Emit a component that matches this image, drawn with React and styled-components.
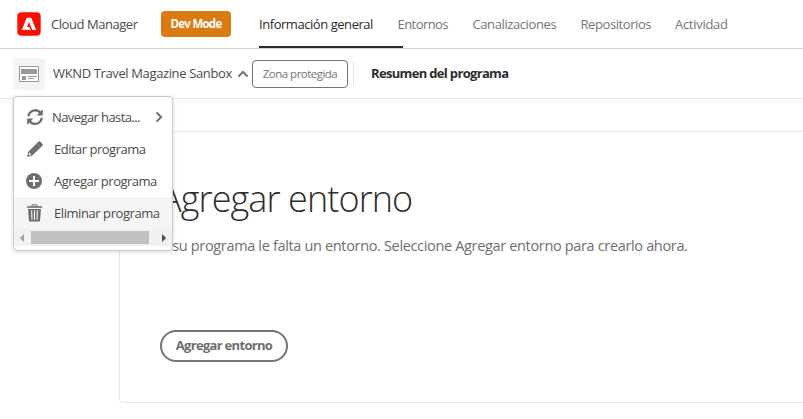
import React from "react";
import styled, { createGlobalStyle } from "styled-components";

const GlobalStyle = createGlobalStyle`
  *, *::before, *::after { box-sizing: border-box; }
  html, body { margin: 0; overflow: hidden; background: #fff; }
  body, button { font-family: "Open Sans", "Noto Sans", sans-serif; font-size: 13px; }
`;

const Page = styled.div`
  position: relative;
  width: 803px;
  height: 419px;
  overflow: hidden;
  background: #fff;
  color: #4b4b4b;
`;

const Label = styled.span`
  white-space: nowrap;
  line-height: 18px;
  letter-spacing: ${(p) => p.$track || -0.45}px;
`;

const Header = styled.header`
  display: flex;
  align-items: center;
  height: 49px;
  padding-left: 17px;
  border-bottom: 1px solid #d0d0d0;
`;

const Brand = styled.div`
  display: flex;
  align-items: center;
  gap: 10px;
  width: 144px;
`;

const ModeBadge = styled.div`
  display: flex;
  align-items: center;
  justify-content: center;
  width: 70px;
  height: 26px;
  margin-right: 28px;
  border-radius: 4px;
  background: #da7b11;
  color: #fff;
  font-size: 11.5px;
  font-weight: 700;
`;

const Tabs = styled.nav`
  display: flex;
  height: 48px;
`;

const Tab = styled.a`
  position: relative;
  display: flex;
  align-items: center;
  width: ${(p) => p.$width}px;
  color: ${(p) => (p.$active ? "#2c2c2c" : "#747474")};
  &::after {
    content: "";
    display: ${(p) => (p.$active ? "block" : "none")};
    position: absolute;
    left: 0;
    bottom: 0;
    width: 144px;
    height: 2px;
    background: #2c2c2c;
  }
`;

const ProgramBar = styled.div`
  display: flex;
  align-items: center;
  height: 50px;
  padding-left: 13px;
  border-bottom: 1px solid #e8e8e8;
`;

const Thumbnail = styled.div`
  display: flex;
  align-items: center;
  justify-content: center;
  width: 32px;
  height: 32px;
  margin-right: 8px;
  border-radius: 4px;
  background: #f4f4f4;
`;

const ProgramName = styled.div`
  display: flex;
  align-items: center;
  width: 199px;
  padding-bottom: 2px;
  gap: 6px;
  svg { margin-top: 2px; }
`;

const SandboxTag = styled.div`
  display: flex;
  align-items: center;
  justify-content: center;
  width: 96px;
  height: 28px;
  border: 1px solid #747474;
  border-radius: 4px;
  color: #747474;
  font-size: 11.5px;
`;

const Divider = styled.div`
  width: 1px;
  height: 24px;
  margin: 0 17px 0 5px;
  background: #e8e8e8;
`;

const Section = styled.div`
  padding-bottom: 2px;
  color: #2c2c2c;
  font-weight: 700;
`;

const Card = styled.main`
  display: flex;
  flex-direction: column;
  align-items: flex-start;
  width: 720px;
  height: 272px;
  margin: 32px 0 0 119px;
  padding: 42px 0 0 40px;
  border: 1px solid #e6e6e6;
  border-radius: 4px;
`;

const Title = styled.h1`
  margin: 0;
  color: #2c2c2c;
  font-size: 36px;
  font-weight: 300;
  line-height: 50px;
  letter-spacing: -0.9px;
  white-space: nowrap;
`;

const Description = styled.p`
  margin: 10px 0 0;
  color: #6e6e6e;
  font-size: 14.5px;
  line-height: 24px;
  letter-spacing: -0.34px;
  white-space: nowrap;
`;

const OutlineButton = styled.button`
  width: 128px;
  height: 32px;
  margin-top: 72px;
  padding: 0 0 2px;
  border: 2px solid #747474;
  border-radius: 16px;
  background: #fff;
  color: #6e6e6e;
  font-weight: 700;
`;

const Menu = styled.div`
  position: absolute;
  left: 13px;
  top: 96px;
  width: 160px;
  height: 155px;
  padding-top: 4px;
  border: 1px solid #cacaca;
  border-radius: 4px;
  background: #fff;
  box-shadow: 0 1px 4px rgba(0, 0, 0, 0.15);
`;

const MenuItem = styled.div`
  display: flex;
  align-items: center;
  height: 32px;
  padding: 0 8px 0 12px;
  background: ${(p) => (p.$hover ? "#f5f5f5" : "#fff")};
  svg:last-child:not(:first-child) { margin-left: auto; }
`;

const MenuIcon = styled.span`
  display: flex;
  width: ${(p) => p.$width || 28}px;
`;

const Scrollbar = styled.div`
  display: flex;
  align-items: center;
  height: 17px;
  padding: 0 5px;
  background: #f1f1f1;
`;

const Thumb = styled.div`
  width: 118px;
  height: 13px;
  margin: 0 auto 0 6px;
  background: #c1c1c1;
`;

const AdobeLogo = () => (
  <svg width="24" height="24" viewBox="0 0 24 24">
    <rect x="0.3" y="0.3" width="23.4" height="23.4" rx="4" fill="#fa0f00" />
    <path d="M9.8 5.8h4.4L19.2 18h-3.9L12 10l-2 4.9h2.4l1.3 3.1H4.8z" fill="#fff" />
  </svg>
);

const ProgramIcon = () => (
  <svg width="20" height="18" viewBox="0 0 20 18">
    <path fill="#fff" stroke="#999" d="M.5 1.5h19v15H.5z" />
    <path fill="#999" d="M2 4h16v5H2zM3 11h4v4H3zM9 11h9v1H9zM9 13h6v1H9z" />
  </svg>
);

const Chevron = ({ up }) => (
  <svg width="10" height="10" viewBox="0 0 10 10" fill="none" stroke="#6e6e6e" strokeWidth="2">
    <path d={up ? "M.4 7.5 5 2.9l4.6 4.6" : "M2.5.4 7.1 5 2.5 9.6"} />
  </svg>
);

const RefreshIcon = () => (
  <svg width="18" height="18" viewBox="0 0 18 18" fill="#6e6e6e">
    <path d="M1.3 8.2h2.3A5.6 5.6 0 0 1 13 5l-2.4 2.4h6.2V1.2l-2.1 2.1A8 8 0 0 0 1.3 8.2z" />
    <path d="M16.9 9.8h-2.3A5.6 5.6 0 0 1 5 13l2.4-2.4H1.2v6.2l2.1-2.1a8 8 0 0 0 13.6-4.9z" />
  </svg>
);

const PencilIcon = () => (
  <svg width="18" height="18" viewBox="0 0 18 18" fill="#6e6e6e">
    <path d="M12.6 1.4a1 1 0 0 1 1.4 0l2.6 2.6a1 1 0 0 1 0 1.4L14.5 7.5l-4-4z" />
    <path fillRule="evenodd" d="M10.6 3.4l4 4-8.3 8.2L1 17.1l1.5-5.6zM3.5 12.6l-.9 2.9 2.8-.9z" />
  </svg>
);

const AddIcon = () => (
  <svg width="18" height="18" viewBox="0 0 18 18">
    <circle cx="8" cy="9" r="8" fill="#6e6e6e" />
    <path d="M8 4v10M3 9h10" stroke="#fff" strokeWidth="2" />
  </svg>
);

const TrashIcon = () => (
  <svg width="18" height="18" viewBox="0 0 18 18" fill="none" stroke="#6e6e6e">
    <path d="M6 3V.9h5V3" />
    <path d="M1 3h15" strokeWidth="1.6" />
    <path fill="#6e6e6e" stroke="none" d="M2 5h13l-1.1 12.5H3.1z" />
    <path stroke="#f5f5f5" strokeWidth="1.1" d="M5.6 6.2l.4 9.6M8.5 6.2v9.6M11.4 6.2l-.4 9.6" />
  </svg>
);

const ScrollArrow = ({ right }) => (
  <svg width="6" height="8" viewBox="0 0 6 8">
    <path d={right ? "M1 0v8L5.2 4z" : "M5 0v8L.8 4z"} fill={right ? "#505050" : "#a3a3a3"} />
  </svg>
);

const tabs = [
  { text: "Información general", width: 138.5, track: -0.45, active: true },
  { text: "Entornos", width: 75, track: -0.56 },
  { text: "Canalizaciones", width: 108, track: -0.4 },
  { text: "Repositorios", width: 94.5, track: -0.42 },
  { text: "Actividad", width: 60, track: -0.29 },
];

const actions = [
  { text: "Navegar hasta...", icon: RefreshIcon, track: -0.59, offset: 26, submenu: true },
  { text: "Editar programa", icon: PencilIcon, track: -0.5 },
  { text: "Agregar programa", icon: AddIcon, track: -0.5 },
  { text: "Eliminar programa", icon: TrashIcon, track: -0.43, hover: true },
];

export default function App() {
  return (
    <Page>
      <GlobalStyle />
      <Header>
        <Brand>
          <AdobeLogo />
          <Label>Cloud Manager</Label>
        </Brand>
        <ModeBadge>
          <Label $track={-0.75}>Dev Mode</Label>
        </ModeBadge>
        <Tabs>
          {tabs.map((t) => (
            <Tab key={t.text} $width={t.width} $active={t.active}>
              <Label $track={t.track}>{t.text}</Label>
            </Tab>
          ))}
        </Tabs>
      </Header>
      <ProgramBar>
        <Thumbnail>
          <ProgramIcon />
        </Thumbnail>
        <ProgramName>
          <Label $track={-0.37}>WKND Travel Magazine Sanbox</Label>
          <Chevron up />
        </ProgramName>
        <SandboxTag>
          <Label $track={-0.52}>Zona protegida</Label>
        </SandboxTag>
        <Divider />
        <Section>
          <Label $track={-0.67}>Resumen del programa</Label>
        </Section>
      </ProgramBar>
      <Card>
        <Title>Agregar entorno</Title>
        <Description>
          A su programa le falta un entorno. Seleccione Agregar entorno para crearlo ahora.
        </Description>
        <OutlineButton>
          <Label $track={-0.7}>Agregar entorno</Label>
        </OutlineButton>
      </Card>
      <Menu>
        {actions.map(({ text, icon: Icon, track, offset, submenu, hover }) => (
          <MenuItem key={text} $hover={hover}>
            <MenuIcon $width={offset}>
              <Icon />
            </MenuIcon>
            <Label $track={track}>{text}</Label>
            {submenu && <Chevron />}
          </MenuItem>
        ))}
        <Scrollbar>
          <ScrollArrow />
          <Thumb />
          <ScrollArrow right />
        </Scrollbar>
      </Menu>
    </Page>
  );
}
